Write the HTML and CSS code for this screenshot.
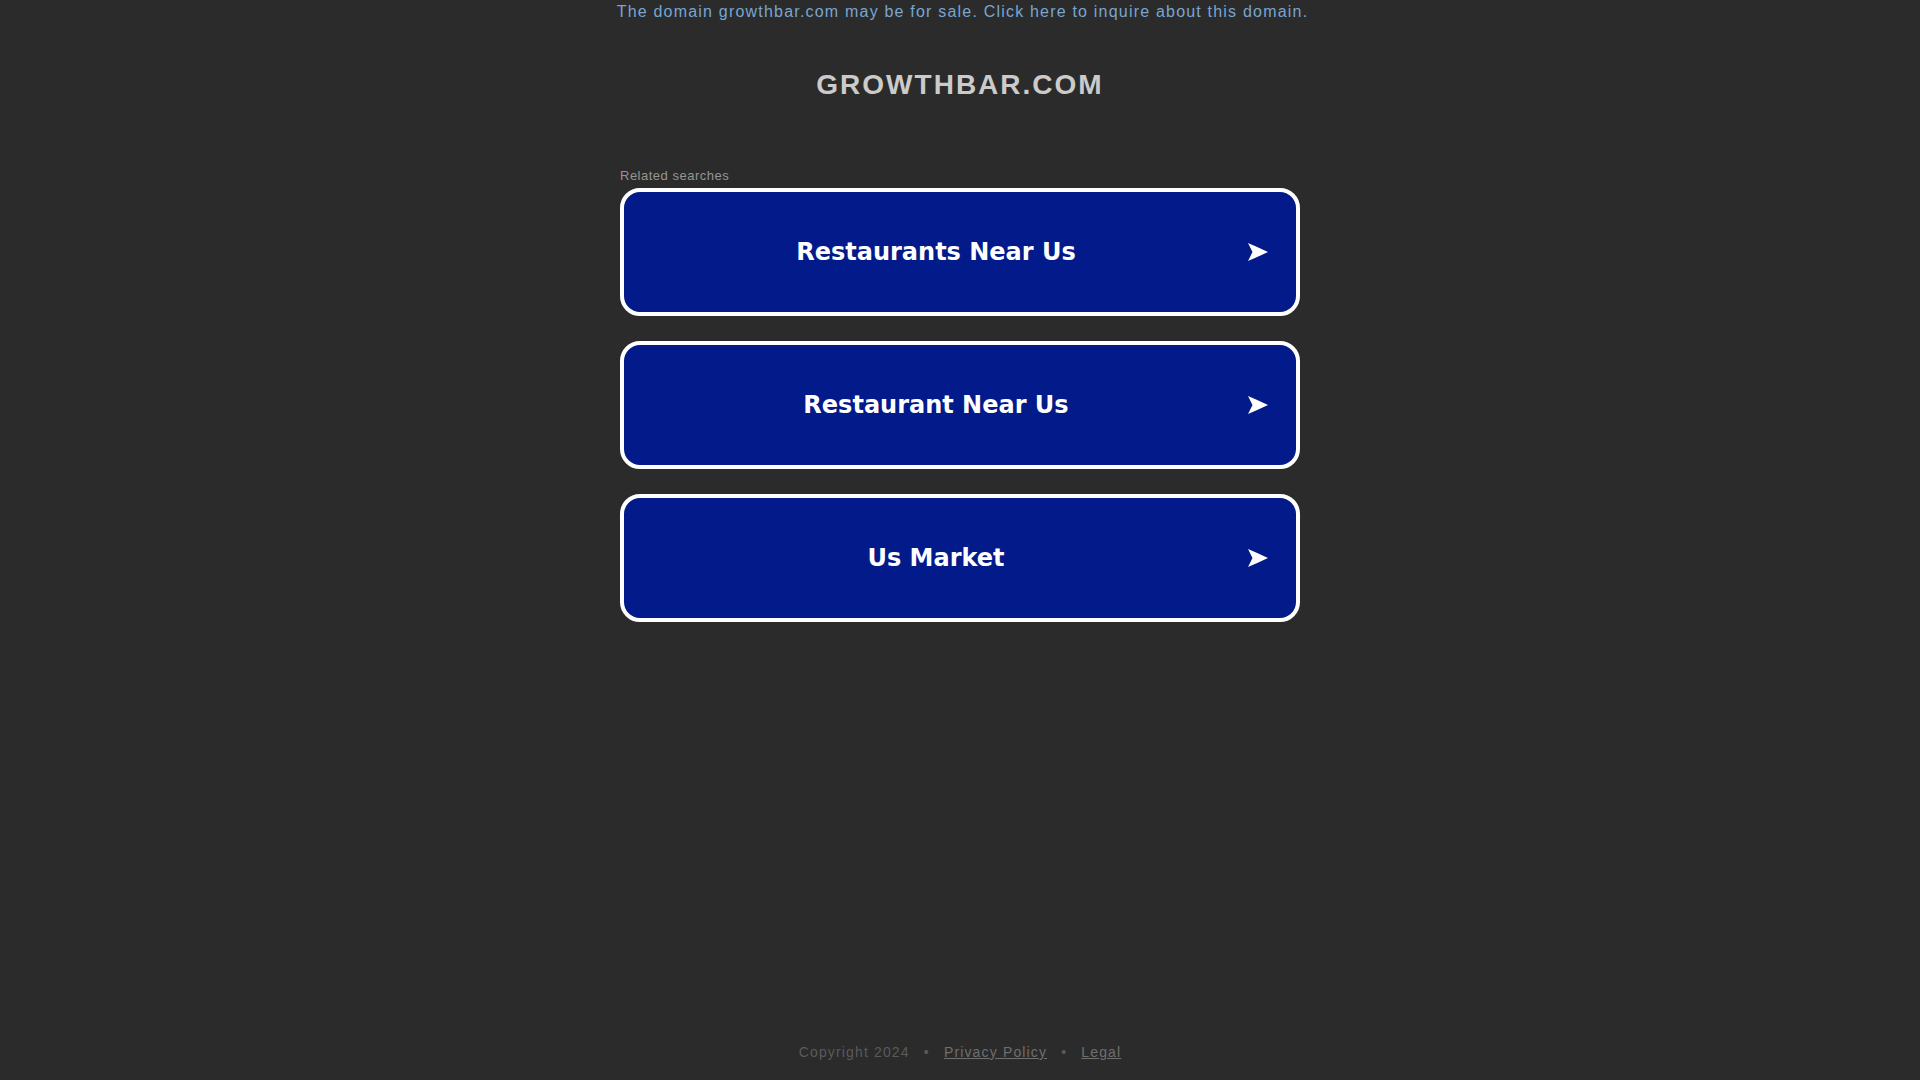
FILE: index.html
```html
<!DOCTYPE html>
<html lang="en">
<head>
<meta charset="utf-8">
<title>growthbar.com</title>
<link rel="stylesheet" href="styles.css">
</head>
<body>
<div class="page">
  <div class="topbar">
    <a class="sale-link" href="#">The domain growthbar.com may be for sale. Click here to inquire about this domain.</a>
  </div>
  <main class="main">
    <h1 class="domain">GROWTHBAR.COM</h1>
    <div class="related">Related searches</div>
    <div class="cards">
      <a class="card" href="#">
        <span class="label">Restaurants Near Us</span>
        <svg class="arrow" viewBox="0 0 20 18" width="20" height="18"><path d="M0 0 Q10 4.2 20 9 Q10 13.8 0 18 L4.5 9 Z" fill="#fff"/></svg>
      </a>
      <a class="card" href="#">
        <span class="label">Restaurant Near Us</span>
        <svg class="arrow" viewBox="0 0 20 18" width="20" height="18"><path d="M0 0 Q10 4.2 20 9 Q10 13.8 0 18 L4.5 9 Z" fill="#fff"/></svg>
      </a>
      <a class="card" href="#">
        <span class="label">Us Market</span>
        <svg class="arrow" viewBox="0 0 20 18" width="20" height="18"><path d="M0 0 Q10 4.2 20 9 Q10 13.8 0 18 L4.5 9 Z" fill="#fff"/></svg>
      </a>
    </div>
  </main>
  <footer class="footer">
    <span class="copy">Copyright 2024</span>
    <span class="dot">•</span>
    <a class="flink" href="#">Privacy Policy</a>
    <span class="dot">•</span>
    <a class="flink" href="#">Legal</a>
  </footer>
</div>
</body>
</html>
```

FILE: styles.css
```css
html, body {
  margin: 0;
  padding: 0;
  background: #2b2b2b;
}

.page {
  min-height: 100vh;
  display: flex;
  flex-direction: column;
  font-family: "Liberation Sans", Arial, sans-serif;
}

.topbar {
  padding-left: 5px;
  text-align: center;
  font-size: 16px;
  line-height: 24px;
  letter-spacing: 1.2px;
}

.sale-link {
  color: #78a6d2;
  text-decoration: none;
}

.main {
  width: 680px;
  margin: 0 auto;
}

.domain {
  margin: 45px 0 0;
  text-align: center;
  font-size: 28px;
  line-height: 32px;
  font-weight: bold;
  letter-spacing: 2px;
  color: #cbcbcb;
}

.related {
  margin-top: 67px;
  font-size: 13px;
  line-height: 15px;
  letter-spacing: 0.5px;
  color: #959595;
}

.cards {
  margin-top: 5px;
  display: flex;
  flex-direction: column;
  gap: 25px;
}

.card {
  box-sizing: border-box;
  height: 128px;
  display: flex;
  align-items: center;
  background: #021a8a;
  border: 4px solid #ffffff;
  border-radius: 20px;
  text-decoration: none;
}

.label {
  flex: 1;
  text-align: center;
  font-family: "DejaVu Sans", Verdana, sans-serif;
  font-weight: bold;
  font-size: 24px;
  color: #ffffff;
}

.arrow {
  flex: none;
  width: 20px;
  height: 18px;
  margin-right: 28px;
}

.footer {
  margin-top: auto;
  padding-bottom: 20px;
  text-align: center;
  font-size: 14px;
  line-height: 16px;
  letter-spacing: 1.15px;
}

.copy {
  color: #5a5a5a;
}

.dot {
  color: #5a5a5a;
  margin: 0 9px;
}

.flink {
  color: #6f6f6f;
  text-decoration: underline;
}
```
